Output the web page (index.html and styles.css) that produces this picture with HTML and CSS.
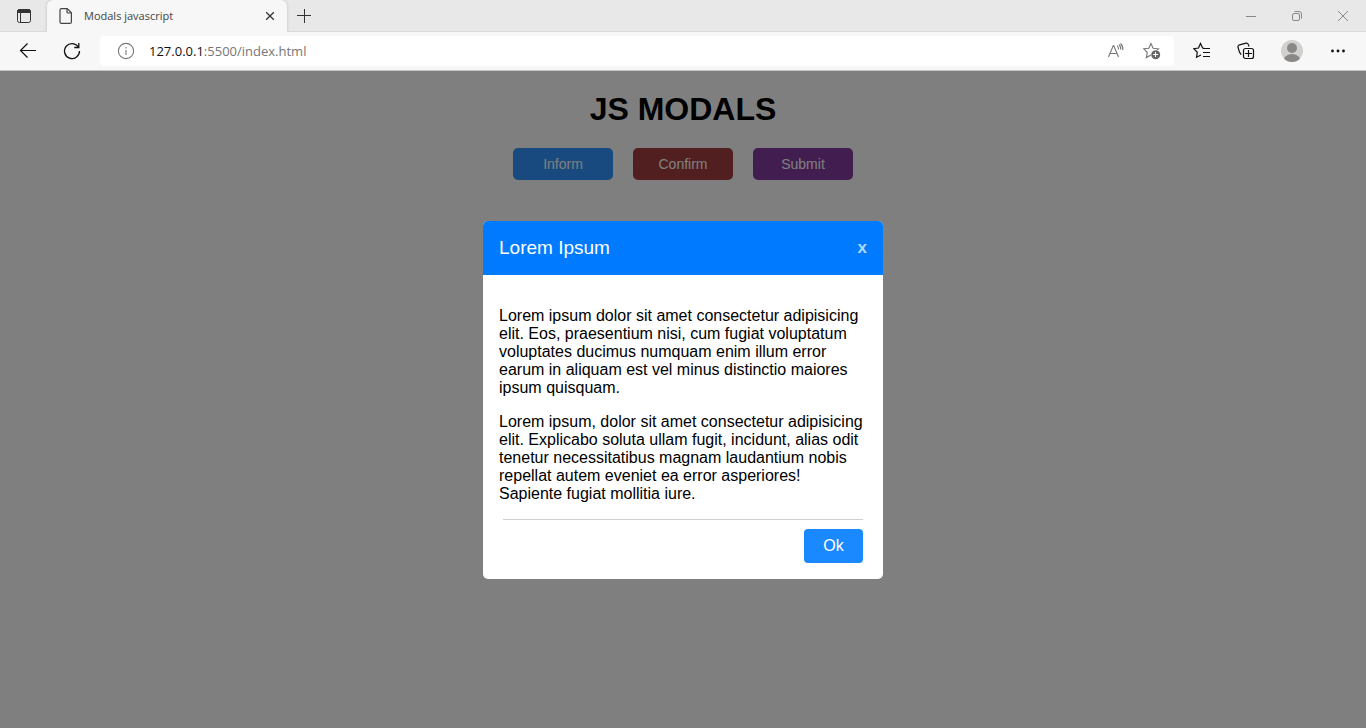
FILE: index.html
```html
<!DOCTYPE html>
<html lang="en">
<head>
<meta charset="utf-8">
<title>Modals javascript</title>
<link rel="stylesheet" href="styles.css">
</head>
<body>
<header class="browser">
  <div class="tab-strip">
    <button class="tab-menu" aria-label="Tab actions">
      <svg width="16" height="16" viewBox="0 0 16 16" fill="none" stroke="#333"><rect x="1.5" y="1.5" width="13" height="13" rx="2"/><path d="M4.5 5v9"/><path d="M1.5 4.500V3.5a2 2 0 0 1 2-2h9a2 2 0 0 1 2 2v1z" fill="#333"/></svg>
    </button>
    <div class="tab">
      <svg width="14" height="16" viewBox="0 0 14 16" fill="none" stroke="#444" stroke-width="1.2"><path d="M2.5.6h5.7l4.2 4.2v9.1a1.5 1.5 0 0 1-1.5 1.5H2.5A1.5 1.5 0 0 1 1 13.9V2.1A1.5 1.5 0 0 1 2.5.6z"/><path d="M8 .8V4a1 1 0 0 0 1 1h3.2"/></svg>
      <span class="tab-title">Modals javascript</span>
      <button class="tab-close" aria-label="Close tab"><svg width="10" height="10" viewBox="0 0 10 10" stroke="#333" stroke-width="1.3"><path d="M1.200 1.200l7.600 7.600M8.800 1.200L1.200 8.800"/></svg></button>
    </div>
    <button class="new-tab" aria-label="New tab"><svg width="16" height="16" viewBox="0 0 16 16" stroke="#333"><path d="M1 7.5h14M8.500 1v14"/></svg></button>
    <div class="window-controls">
      <button aria-label="Minimize"><svg width="12" height="12" viewBox="0 0 12 12" stroke="#888"><path d="M1 6.5h10"/></svg></button>
      <button aria-label="Restore"><svg width="12" height="12" viewBox="0 0 12 12" fill="none" stroke="#888"><rect x="1.500" y="3.500" width="7" height="7" rx="1.500"/><path d="M3.500 1.500H8a2.500 2.500 0 0 1 2.500 2.500v4.500"/></svg></button>
      <button aria-label="Close"><svg width="12" height="12" viewBox="0 0 12 12" stroke="#888"><path d="M1 1l10 10M11 1L1 11"/></svg></button>
    </div>
  </div>
  <div class="toolbar">
    <button class="nav-button" aria-label="Back"><svg width="18" height="16" viewBox="0 0 18 16" fill="none" stroke="#111" stroke-width="1.2"><path d="M17 7.500H1.500M8.500.500l-7 7 7 7"/></svg></button>
    <button class="nav-button" aria-label="Refresh"><svg width="18" height="18" viewBox="0 0 18 18" fill="none" stroke="#111" stroke-width="1.3"><path d="M15.500 5.300A7.500 7.500 0 1 0 16.500 9"/><path d="M15.800 1v4.500h-4.500"/></svg></button>
    <div class="address">
      <svg width="18" height="18" viewBox="0 0 18 18" fill="none" stroke="#777" stroke-width="1.1"><circle cx="9" cy="9" r="7.600"/><path d="M9 8v5M9 5v1.500"/></svg>
      <span class="url"><span class="host">127.0.0.1</span>:5500/index.html</span>
      <button aria-label="Read aloud"><svg width="18" height="18" viewBox="0 0 18 18" fill="none" stroke="#777" stroke-width="1.1"><path d="M1.500 15L6.300 3.500h.4l4.800 11.500M3 11.500h7M10.200 3.700c1 1 1.500 2.200 1.300 3.800M12 2.500c1.400 1.500 2 3.200 1.700 5M13.500 1.500c2 2 2.700 4 2.300 6.500"/></svg></button>
      <button aria-label="Add to favorites"><svg width="18" height="18" viewBox="0 0 18 18"><path d="M8 1.500l2.100 4.700 5.400.6-3.900 3.700 1 5L8 13l-4.700 2.600 1-5.100L.8 6.800l5-.6z" fill="none" stroke="#777" stroke-width="1.100"/><circle cx="12.700" cy="12.700" r="5" fill="#fff"/><circle cx="12.700" cy="12.700" r="4.500" fill="#666"/><path d="M10.200 12.500h5M12.500 10v5" stroke="#fff"/></svg></button>
    </div>
    <div class="toolbar-actions">
      <button aria-label="Favorites"><svg width="18" height="18" viewBox="0 0 18 18" fill="none" stroke="#111" stroke-width="1.2"><path d="M12 6.500L9.600 6 7.500 1.500 5.500 6l-4.700.7 3.500 3.600-.8 5 4.500-2.300"/><path d="M10 6.500h7M10 10.500h7M10 14.500h7"/></svg></button>
      <button aria-label="Collections"><svg width="18" height="18" viewBox="0 0 18 18" fill="none" stroke="#111" stroke-width="1.2"><rect x="6.500" y="6.500" width="10" height="10" rx="2"/><path d="M11.500 8v7M8 11.500h7M4.200 12.600L2.500 10.200 1 5.300a2 2 0 0 1 1.500-2.400l6.500-1.700a2 2 0 0 1 2.400 1.500l.7 1.800"/></svg></button>
      <button aria-label="Profile"><svg width="24" height="24" viewBox="0 0 24 24"><defs><clipPath id="profile"><circle cx="12" cy="12" r="11"/></clipPath></defs><circle cx="12" cy="12" r="11" fill="#d2d0ce"/><g clip-path="url(#profile)" fill="#8a8886"><circle cx="12" cy="9" r="5"/><ellipse cx="12" cy="21.500" rx="8.500" ry="6.500"/></g></svg></button>
      <button aria-label="Settings and more"><svg width="16" height="16" viewBox="0 0 16 16" fill="#111"><circle cx="2.500" cy="8" r="1.400"/><circle cx="8" cy="8" r="1.400"/><circle cx="13.500" cy="8" r="1.400"/></svg></button>
    </div>
  </div>
</header>
<main class="page">
  <h1>JS MODALS</h1>
  <div class="actions">
    <button class="action inform">Inform</button>
    <button class="action confirm">Confirm</button>
    <button class="action submit">Submit</button>
  </div>
  <div class="overlay">
    <section class="modal" role="dialog" aria-labelledby="modal-title">
      <div class="modal-header">
        <h2 id="modal-title">Lorem Ipsum</h2>
        <button class="modal-close">x</button>
      </div>
      <div class="modal-body">
        <p>Lorem ipsum dolor sit amet consectetur adipisicing elit. Eos, praesentium nisi, cum fugiat voluptatum voluptates ducimus numquam enim illum error earum in aliquam est vel minus distinctio maiores ipsum quisquam.</p>
        <p>Lorem ipsum, dolor sit amet consectetur adipisicing elit. Explicabo soluta ullam fugit, incidunt, alias odit tenetur necessitatibus magnam laudantium nobis repellat autem eveniet ea error asperiores! Sapiente fugiat mollitia iure.</p>
      </div>
      <div class="modal-footer"><button class="ok">Ok</button></div>
    </section>
  </div>
</main>
</body>
</html>
```
FILE: styles.css
```css
* { box-sizing: border-box; }
body {
  margin: 0;
  min-height: 100vh;
  display: flex;
  flex-direction: column;
  font-family: "Liberation Sans", Arial, sans-serif;
}
button {
  border: 0;
  padding: 0;
  background: none;
  font-family: inherit;
}
svg { display: block; flex: none; }

.browser {
  background: #f7f7f7;
  border-bottom: 1px solid #c4c6c4;
  font-family: "Open Sans", "Segoe UI", sans-serif;
}
.tab-strip {
  display: flex;
  align-items: center;
  height: 32px;
  background: #e8e8e8;
  box-shadow: inset 0 -1px #dadada;
}
.tab-menu { width: 47px; padding-left: 16px; }
.tab {
  display: flex;
  align-items: center;
  width: 240px;
  height: 32px;
  padding: 0 12px;
  gap: 11px;
  background: #f7f7f7;
  border-radius: 6px 6px 0 0;
  box-shadow: 0 0 3px #bbb;
  clip-path: inset(0 -4px);
}
.tab-title { flex: 1; padding-bottom: 2px; font-size: 11px; color: #444; }
.new-tab { padding-left: 9px; }
.window-controls { display: flex; margin-left: auto; }
.window-controls button {
  display: grid;
  place-items: center;
  width: 46px;
  height: 32px;
}
.toolbar {
  display: flex;
  align-items: center;
  height: 38px;
  padding: 0 6px;
}
.nav-button { display: grid; place-items: center; width: 44px; }
.address {
  display: flex;
  flex: 1;
  align-items: center;
  height: 30px;
  margin-left: 6px;
  padding: 0 13px 0 17px;
  gap: 18px;
  background: #fff;
  border-radius: 4px;
}
.url { flex: 1; margin-left: -4px; font-size: 13px; color: #767676; }
.host { color: #111; }
.toolbar-actions {
  display: grid;
  grid-template-columns: 44px 44px 48px 44px;
  padding-left: 6px;
}
.toolbar-actions button { display: grid; place-items: center; }

.page {
  position: relative;
  flex: 1;
  background: #fff;
  text-align: center;
}
h1 { margin: 20px 0; font-size: 32px; line-height: 37px; }
.actions { display: flex; justify-content: center; gap: 20px; }
.action {
  width: 100px;
  height: 32px;
  border-radius: 5px;
  color: #fff;
  font-size: 14px;
  opacity: 0.8;
}
.inform { background: #007bff; }
.confirm { background: #8b0f10; }
.submit { background: #660a86; }
.overlay {
  position: absolute;
  inset: 0;
  display: flex;
  justify-content: center;
  align-items: flex-start;
  padding-top: 150px;
  background: rgba(0, 0, 0, 0.5);
}
.modal {
  width: 400px;
  background: #fff;
  border-radius: 5px;
  overflow: hidden;
  text-align: left;
}
.modal-header {
  display: flex;
  justify-content: space-between;
  align-items: center;
  height: 54px;
  padding: 0 16px;
  background: #007bff;
  color: #fff;
}
h2 { margin: 0; font-size: 19px; font-weight: 400; }
.modal-close { color: #b3d7ff; font-size: 17px; font-weight: 700; }
.modal-body { padding: 16px 16px 0; font-size: 16px; line-height: 18px; }
.modal-body p { margin: 16px 0; }
.modal-footer {
  margin: 0 20px;
  padding: 9px 0 16px;
  border-top: 1px solid #cfcfcf;
  text-align: right;
}
.ok {
  width: 59px;
  height: 34px;
  border-radius: 4px;
  background: #1a88ff;
  color: #fff;
  font-size: 16px;
}
```
